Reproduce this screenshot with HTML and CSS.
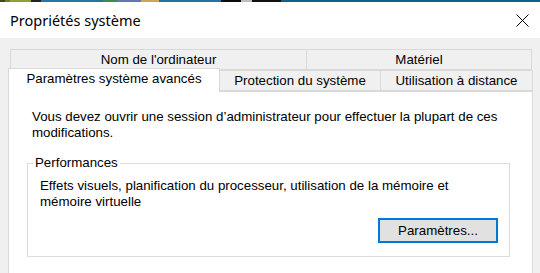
FILE: index.html
```html
<!DOCTYPE html>
<html lang="fr">
  <head>
    <meta charset="UTF-8" />
    <meta name="viewport" content="width=device-width, initial-scale=1.0" />
    <title>Propriétés système</title>
    <link rel="stylesheet" href="styles.css">
  </head>
  <body>
  <div class="strip">
    <span class="s1"></span><span class="s2"></span><span class="s3"></span><span class="s4"></span>
    <span class="s5"></span><span class="s6"></span><span class="s7"></span><span class="s8"></span>
    <span class="s9"></span><span class="s10"></span><span class="s11"></span><span class="s12"></span>
    <span class="s13"></span>
  </div>
  <div class="titlebar">
    <div class="title">Propriétés système</div>
    <svg class="close" width="13" height="13" viewBox="0 0 13 13">
      <path d="M0.5 0.5 L12.5 12.5 M12.5 0.5 L0.5 12.5" stroke="#000" stroke-width="1" fill="none"/>
    </svg>
  </div>
  <div class="dialog">
    <div class="tabs back">
      <div class="tab t-nom">Nom de l'ordinateur</div>
      <div class="tab t-mat">Matériel</div>
    </div>
    <div class="tabs front">
      <div class="tab active t-param">Paramètres système avancés</div>
      <div class="tab t-prot">Protection du système</div>
      <div class="tab t-dist">Utilisation à distance</div>
    </div>
    <div class="panel">
      <p class="notice">Vous devez ouvrir une session d’administrateur pour effectuer la plupart de ces modifications.</p>
      <fieldset class="group">
        <legend>Performances</legend>
        <p>Effets visuels, planification du processeur, utilisation de la mémoire et mémoire virtuelle</p>
        <div class="actions">
          <button class="btn">Paramètres...</button>
        </div>
      </fieldset>
    </div>
  </div>
  </body>
</html>
```

FILE: styles.css
```css
* {
  box-sizing: border-box;
}
body {
  margin: 0;
  width: 540px;
  height: 273px;
  overflow: hidden;
  background: #f0f0f0;
  font-family: "Liberation Sans", Arial, sans-serif;
  font-size: 13.3px;
  color: #000;
}
.strip {
  display: flex;
  height: 2px;
}
.strip span { height: 2px; }
.s1 { width: 5px; background: #3d4a1c; }
.s2 { width: 5px; background: #6f7d2a; }
.s3 { width: 21px; background: #8f9f36; }
.s4 { width: 10px; background: #1e2420; }
.s5 { width: 62px; background: #2576a6; }
.s6 { width: 14px; background: #3a8a52; }
.s7 { width: 24px; background: #6476b8; }
.s8 { width: 18px; background: #c9a65a; }
.s9 { width: 62px; background: #2274a4; }
.s10 { width: 20px; background: #0c0c0c; }
.s11 { width: 11px; background: #bcbcbc; }
.s12 { width: 29px; background: #111; }
.s13 { flex: 1; background: #0f5f8c; }

.titlebar {
  height: 36px;
  background: #fff;
  display: flex;
  justify-content: space-between;
  align-items: flex-start;
  padding: 8px 11px 0 10px;
}
.title {
  font-family: "Noto Sans", sans-serif;
  font-size: 14.5px;
  line-height: 20px;
}
.close {
  margin-top: 4px;
}

.dialog {
  padding: 11px 7px 0 8px;
}
.tabs {
  display: flex;
  height: 21px;
}
.tabs.back {
  margin-left: 2px;
  width: 522px;
}
.tab {
  border: 1px solid #d9d9d9;
  background: #f0f0f0;
  text-align: center;
  padding-top: 1px;
  line-height: 18px;
  white-space: nowrap;
}
.tab + .tab {
  margin-left: -1px;
}
.t-nom { width: 297px; }
.t-mat { flex: 1; }
.t-param { width: 212px; }
.t-prot { width: 161px; }
.t-dist { width: 153px; }
.tab.active {
  position: relative;
  z-index: 1;
  background: #fff;
  border-bottom: none;
  margin-top: -2px;
  margin-bottom: -1px;
}
.tab.active + .tab {
  margin-left: 0;
  border-left: none;
}

.panel {
  width: 525px;
  height: 200px;
  background: #fff;
  border: 1px solid #d9d9d9;
  padding: 17px 23px 0 18px;
}
.notice {
  margin: 0 0 14px 5px;
  line-height: 16px;
}
.group {
  margin: 0;
  border: 1px solid #dcdcdc;
  padding: 7px 11px 13px 12px;
  width: 483px;
}
.group legend {
  padding: 0 2px;
  margin-left: -7px;
  line-height: 16px;
}
.group p {
  margin: 0;
  line-height: 16px;
}
.actions {
  display: flex;
  justify-content: flex-end;
  margin-top: 8px;
}
.btn {
  width: 120px;
  height: 25px;
  background: #e1e1e1;
  border: 2px solid #0078d7;
  font-family: "Liberation Sans", Arial, sans-serif;
  font-size: 13.3px;
  color: #000;
  padding: 0;
}
```
